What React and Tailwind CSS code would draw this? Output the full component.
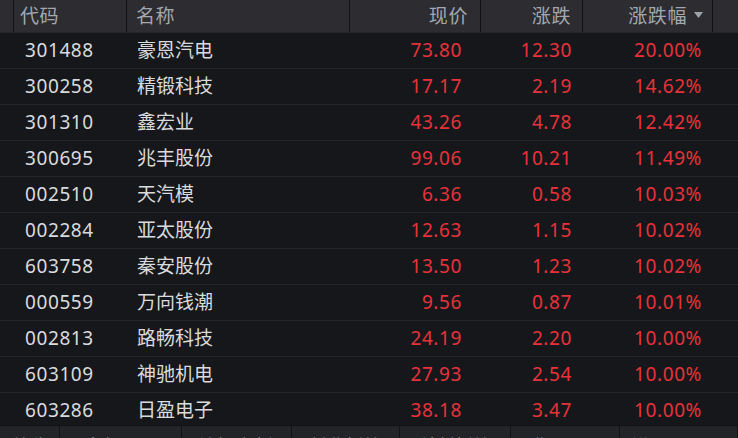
import React from 'react';

const rows = [
  ['301488', '豪恩汽电', '73.80', '12.30', '20.00%'],
  ['300258', '精锻科技', '17.17', '2.19', '14.62%'],
  ['301310', '鑫宏业', '43.26', '4.78', '12.42%'],
  ['300695', '兆丰股份', '99.06', '10.21', '11.49%'],
  ['002510', '天汽模', '6.36', '0.58', '10.03%'],
  ['002284', '亚太股份', '12.63', '1.15', '10.02%'],
  ['603758', '秦安股份', '13.50', '1.23', '10.02%'],
  ['000559', '万向钱潮', '9.56', '0.87', '10.01%'],
  ['002813', '路畅科技', '24.19', '2.20', '10.00%'],
  ['603109', '神驰机电', '27.93', '2.54', '10.00%'],
  ['603286', '日盈电子', '38.18', '3.47', '10.00%'],
];

const tabs = [
  { w: 'w-[60px]', label: '总览' },
  { w: 'w-[122px]', label: '全部 A股' },
  { w: 'w-[110px]', label: '沪深主板' },
  { w: 'w-[108px]', label: '创业板块' },
  { w: 'w-[111px]', label: '科创板块' },
  { w: 'w-[109px]', label: '北证A股' },
  { w: 'flex-1', label: '港股通股票' },
];

export default function App() {
  return (
    <div
      className="w-[738px] h-[438px] overflow-hidden bg-[#15171b] flex flex-col text-[19px] tracking-[0.6px]"
      style={{ fontFamily: '"Noto Sans", "Noto Sans CJK SC", sans-serif' }}
    >
      <div className="h-[425px] overflow-hidden">
        {/* header */}
        <div className="h-[32px] flex bg-[#2c2c31] text-[#a3a8b0] leading-none">
          <div className="w-[14px] border-r border-[#111215]" />
          <div className="w-[113px] border-r border-[#111215] flex items-center pl-[6px]">代码</div>
          <div className="w-[223px] border-r border-[#111215] flex items-center pl-[9px]">名称</div>
          <div className="w-[131px] border-r border-[#111215] flex items-center justify-end pr-[12px]">现价</div>
          <div className="w-[102px] border-r border-[#111215] flex items-center justify-end pr-[11px]">涨跌</div>
          <div className="w-[130px] border-r border-[#111215] flex items-center justify-end pr-[9px] gap-[7px]">
            涨跌幅
            <svg width="9" height="6" viewBox="0 0 9 6" className="mt-[-2px]">
              <path d="M0 0 H9 L4.5 6 Z" fill="#9ea2aa" />
            </svg>
          </div>
          <div className="flex-1" />
        </div>
        {/* rows */}
        {rows.map((r) => (
          <div key={r[0]} className="h-[36px] flex border-t border-[#25272b] leading-none">
            <div className="w-[127px] flex items-center pl-[25px] text-[#dadbdd]">{r[0]}</div>
            <div className="w-[223px] flex items-center pl-[10px] text-[#dadbdd] tracking-normal">{r[1]}</div>
            <div className="w-[131px] flex items-center justify-end pr-[19px] text-[#e8323a]">{r[2]}</div>
            <div className="w-[102px] flex items-center justify-end pr-[11px] text-[#e8323a]">{r[3]}</div>
            <div className="w-[130px] flex items-center justify-end pr-[11px] text-[#e8323a]">{r[4]}</div>
            <div className="flex-1" />
          </div>
        ))}
      </div>
      {/* bottom tab bar, mostly below the window edge */}
      <div className="flex-1 flex bg-[#232428] border-t border-[#111215] overflow-hidden">
        {tabs.map((t, i) => (
          <div
            key={i}
            className={`${t.w} border-r border-[#111215] text-[#9a9ea6] text-[18px] leading-none pt-[11px] text-center whitespace-nowrap overflow-hidden`}
          >
            {t.label}
          </div>
        ))}
      </div>
    </div>
  );
}
